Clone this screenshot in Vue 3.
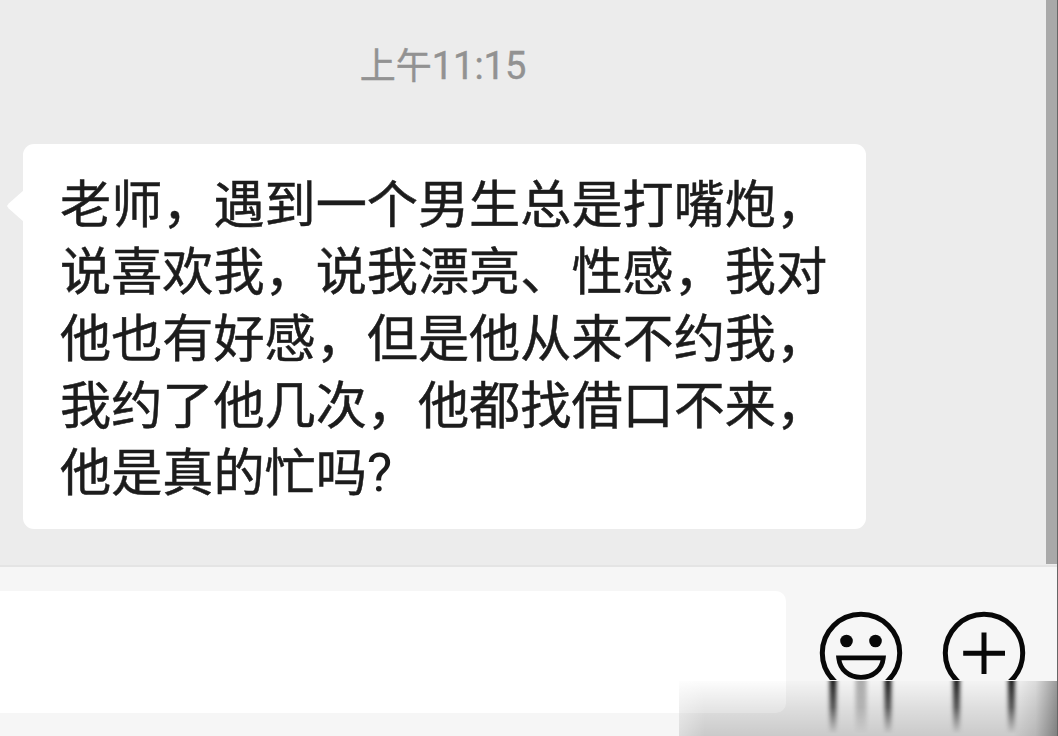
<template>
    <div class="chat">
        <main class="messages">
            <div class="thread">
                <time class="timestamp">上午<span class="digits">11:15</span></time>
                <div class="bubble">
                    <p v-for="line in lines" :key="line" class="bubble-line">{{ line }}</p>
                    <p class="bubble-line">他是真的忙吗<span class="mark">?</span></p>
                </div>
            </div>
            <div class="scrollbar"></div>
        </main>

        <footer class="composer">
            <div class="composer-input"></div>
            <button class="icon-btn" aria-label="表情">
                <svg width="84" height="69" viewBox="0 0 84 69" fill="none" stroke="#080808">
                    <circle cx="42" cy="42" r="38.7" stroke-width="5" />
                    <circle cx="27.5" cy="30" r="6.3" fill="#080808" stroke="none" />
                    <circle cx="56.5" cy="30" r="6.3" fill="#080808" stroke="none" />
                    <path d="M19.7 46.9H64.3C63 59 54 66.3 42 66.3S21 59 19.7 46.9Z" stroke-width="4.8" />
                </svg>
            </button>
            <button class="icon-btn" aria-label="更多">
                <svg width="84" height="69" viewBox="0 0 84 69" fill="none" stroke="#080808">
                    <circle cx="42" cy="42" r="38.7" stroke-width="5" />
                    <path d="M42 21.5V63M21.2 42.2H63" stroke-width="5" />
                </svg>
            </button>
        </footer>

        <!-- Smeared corner -->
        <svg class="smear" width="379" height="55" viewBox="0 0 379 55">
            <defs>
                <linearGradient id="shade" x1="0" y1="0" x2="0" y2="1">
                    <stop offset="0" stop-color="#000" stop-opacity="0.01" />
                    <stop offset="0.5" stop-color="#000" stop-opacity="0.1" />
                    <stop offset="1" stop-color="#000" stop-opacity="0.18" />
                </linearGradient>
                <linearGradient id="fade" x1="0" y1="0" x2="1" y2="0">
                    <stop offset="0" stop-color="#fff" stop-opacity="0.35" />
                    <stop offset="1" stop-color="#fff" stop-opacity="0" />
                </linearGradient>
                <linearGradient id="edge" x1="0" y1="0" x2="1" y2="0">
                    <stop offset="0" stop-color="#000" stop-opacity="0" />
                    <stop offset="0.5" stop-color="#000" stop-opacity="0.1" />
                    <stop offset="1" stop-color="#000" stop-opacity="0.38" />
                </linearGradient>
                <linearGradient id="drip" x1="0" y1="0" x2="0" y2="1">
                    <stop offset="0" stop-color="#000" stop-opacity="0.95" />
                    <stop offset="0.5" stop-color="#000" stop-opacity="0.65" />
                    <stop offset="1" stop-color="#000" stop-opacity="0" />
                </linearGradient>
                <filter id="soft" x="-100%" y="0" width="300%" height="100%">
                    <feGaussianBlur stdDeviation="2 0" />
                </filter>
            </defs>
            <rect width="379" height="55" fill="url(#shade)" />
            <rect width="26" height="55" fill="url(#fade)" />
            <rect x="334" width="45" height="55" fill="url(#edge)" />
            <rect
                v-for="drip in drips"
                :key="drip.x"
                :x="drip.x - drip.width / 2"
                :width="drip.width"
                :opacity="drip.opacity"
                height="53"
                fill="url(#drip)"
                filter="url(#soft)"
            />
        </svg>
        <div class="window-edge"></div>
    </div>
</template>

<script setup>
const lines = [
    '老师，遇到一个男生总是打嘴炮，',
    '说喜欢我，说我漂亮、性感，我对',
    '他也有好感，但是他从来不约我，',
    '我约了他几次，他都找借口不来，'
];

const drips = [
    { x: 154, width: 6.5, opacity: 1 },
    { x: 182, width: 11, opacity: 0.3 },
    { x: 209, width: 6.5, opacity: 1 },
    { x: 277.5, width: 6.5, opacity: 1 },
    { x: 332.5, width: 6.5, opacity: 1 }
];
</script>

<style>
body {
    margin: 0;
    overflow: hidden;
}
</style>

<style scoped>
.chat {
    position: relative;
    display: flex;
    flex-direction: column;
    width: 1058px;
    height: 736px;
    overflow: hidden;
    background: #ececec;
    font-family: 'Noto Sans CJK SC', sans-serif;
}

.messages {
    display: flex;
    height: 565px;
}

.thread {
    flex: 1;
    display: flex;
    flex-direction: column;
    align-items: flex-start;
}

.timestamp {
    width: 886px;
    height: 52px;
    margin-top: 37px;
    text-align: center;
    font-size: 36px;
    line-height: 52px;
    color: #929292;
    -webkit-text-stroke: 0.4px #929292;
}

.digits {
    font-family: Roboto, sans-serif;
    font-size: 38px;
    line-height: 1;
}

.bubble {
    position: relative;
    box-sizing: border-box;
    width: 843px;
    height: 385px;
    margin: 55px 0 0 23px;
    padding: 24px 0 0 37px;
    border-radius: 11px;
    background: #fff;
}

.bubble::before {
    content: '';
    position: absolute;
    top: 46px;
    left: -16px;
    width: 17px;
    height: 32px;
    background: #fff;
    clip-path: polygon(100% 0, 10% 42%, 0 50%, 10% 58%, 100% 100%);
}

.bubble-line {
    height: 67px;
    margin: 0;
    font-size: 51.15px;
    line-height: 67px;
    white-space: nowrap;
    color: #1c1c1c;
    -webkit-text-stroke: 0.5px #1c1c1c;
}

.mark {
    font-family: Roboto, sans-serif;
    font-size: 54px;
    line-height: 1;
    -webkit-text-stroke: 0;
}

.scrollbar {
    width: 12px;
    height: 564px;
    background: #a9a9a9;
}

.composer {
    display: flex;
    align-items: flex-start;
    flex: 1;
    box-sizing: border-box;
    padding-top: 24px;
    border-top: 2px solid #e4e4e4;
    background: #f6f6f6;
}

.composer-input {
    width: 786px;
    height: 122px;
    border-radius: 0 10px 10px 0;
    background: #fff;
}

.icon-btn {
    display: block;
    margin: 20px 0 0 33px;
    padding: 0;
    border: none;
    background: none;
}

.icon-btn + .icon-btn {
    margin-left: 39px;
}

.icon-btn svg {
    display: block;
}

.smear {
    position: absolute;
    right: 0;
    bottom: 0;
}

.window-edge {
    position: absolute;
    top: 0;
    right: 0;
    width: 1px;
    height: 100%;
    background: #666;
}
</style>
